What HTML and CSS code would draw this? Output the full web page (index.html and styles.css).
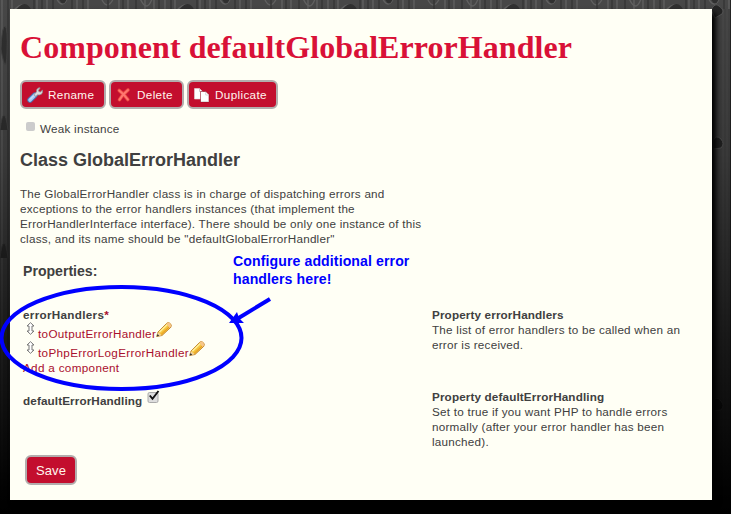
FILE: index.html
```html
<!DOCTYPE html>
<html lang="en">
<head>
<meta charset="utf-8">
<title>Component defaultGlobalErrorHandler</title>
<link rel="stylesheet" href="styles.css">
</head>
<body>
<svg class="wood" width="731" height="514" aria-hidden="true">
  <defs>
    <linearGradient id="fade" x1="0" y1="0" x2="0" y2="1">
      <stop offset="0" stop-color="#000" stop-opacity="0"/>
      <stop offset=".3" stop-color="#000" stop-opacity=".2"/>
      <stop offset=".65" stop-color="#000" stop-opacity=".65"/>
      <stop offset=".95" stop-color="#000" stop-opacity=".97"/>
      <stop offset="1" stop-color="#000"/>
    </linearGradient>
    <pattern id="grain" width="163" height="514" patternUnits="userSpaceOnUse">
      <rect width="163" height="514" fill="#474747"/>
      <g fill="none" stroke="#606060" stroke-width="1.3">
        <path d="M2 0v514M12 0v514M37 0v514M47 0v514M77 0v514M88 0v514M119 0v514M128 0v514M145 0v514M154 0v514"/>
        <path d="M14 10Q24 0 31 10M55 -5q7 18 14 0M100 -5q7 20 15 0M139 -4q8 20 14 0"/>
      </g>
      <g fill="none" stroke="#353535" stroke-width="1.5">
        <path d="M8 0v514M34 0v514M42 0v514M53 0v514M72 0v514M83 0v514M108 0v514M123 0v514M136 0v514M159 0v514"/>
      </g>
      <path d="M17 9q8-10 14 0M59-1q4 9 8 0M132 0l4 9" fill="#303030"/>
    </pattern>
  </defs>
  <rect width="731" height="514" fill="url(#grain)"/>
  <rect x="712" y="9" width="19" height="505" fill="#424242"/>
  <g fill="none" stroke="#4d4d4d"><path d="M723 9v505M727 9v505"/><path d="M730.500 0v514" stroke="#242424"/></g>
  <g fill="#252525" stroke="#555" stroke-width="1">
    <path d="M711 10q4-8 8-4 6 4 3 8l-7 4zM713 141q3-7 8-2 4 5 0 9l-8 1zM713 402q3-7 8-1 4 5 0 9l-8 1z"/>
    <path d="M1 49q1-23 4-23 3 2 2 27T1 49M0 130q4-30 8 0M0 258q4-30 8 0" fill="#303030" stroke="#444"/>
  </g>
  <rect width="731" height="514" fill="url(#fade)"/>
</svg>
<main class="page">
  <h1>Component defaultGlobalErrorHandler</h1>
  <div class="toolbar">
    <a class="button rename"><svg width="16" height="16" viewBox="0 0 16 16"><path d="M3 13L8 8" stroke="#4774b5" stroke-width="5.4" stroke-linecap="round"/><path d="M3 13L8 8" stroke="#a8caf5" stroke-width="3.6" stroke-linecap="round"/><path d="M3 12.500L7 8.500" stroke="#dceaff" stroke-width="1"/><path d="M7 7.400L9.500 5Q8.700 2 12 .7l1.200.2-1.700 2.300.4 1.400 1.500.3 2.100-1.800q.8 4-3 4.800-.8.200-1.700-.1L8.600 9.600z" fill="#ddd" stroke="#8b8990" stroke-width=".8"/></svg>Rename</a>
    <a class="button delete"><svg width="16" height="16" viewBox="0 0 16 16"><path d="M3.200 3.500q4.200 3 8.600 9M12 3Q6.700 7 3.500 12.700" fill="none" stroke="#e9453f" stroke-width="3.600" stroke-linecap="round"/><path d="M3.200 3.500q4.200 3 8.600 9M12 3Q6.700 7 3.500 12.700" fill="none" stroke="#ff7770" stroke-width="2" stroke-linecap="round"/></svg>Delete</a>
    <a class="button duplicate"><svg width="16" height="16" viewBox="0 0 16 16"><path d="M.5 1.500h5l3 3V12h-8z" fill="#fff" stroke="#ddd" stroke-width=".6"/><path d="M5.500 1.500v3h3" fill="none" stroke="#bbb" stroke-width=".8"/><path d="M6.500 4.500h5.300l3.200 3V15H6.500z" fill="#fff" stroke="#910f24" stroke-width=".6"/><path d="M11.700 5v3H15" fill="none" stroke="#ccc" stroke-width=".8"/><path d="M7 14.500h7.500" stroke="#ddd"/></svg>Duplicate</a>
  </div>
  <div class="weak"><span class="disabled-box"></span>Weak instance</div>
  <h2>Class GlobalErrorHandler</h2>
  <p class="description">The GlobalErrorHandler class is in charge of dispatching errors and<br>exceptions to the error handlers instances (that implement the<br>ErrorHandlerInterface interface). There should be only one instance of this<br>class, and its name should be "defaultGlobalErrorHandler"</p>
  <h3>Properties:</h3>
  <div class="property handlers">
    <div class="field">
      <b>errorHandlers<span class="required">*</span></b>
      <div class="handler"><svg class="move" width="9" height="13" viewBox="0 0 9 13"><path d="M4.500.7L8 4H6v5h2l-3.500 3.300L1 9h2V4H1z" fill="#fff" stroke="#777"/></svg><a>toOutputErrorHandler</a><svg class="pencil" width="16" height="16" viewBox="0 0 16 16"><path d="M.7 14.500L2 10 10.600 1.400Q12-.2 14 1.300t.9 3.900L6 13.500z" fill="#f6c33c" stroke="#b46e16" stroke-width=".8"/><path d="M3.300 10.300L11.300 2.500" stroke="#fff09a" stroke-width="1.600"/><path d="M5 12.500L13 5" stroke="#e69a20"/><path d="M.7 14.500L2 10.200l3.800 3z" fill="#f2d4a0"/><path d="M.7 14.500l.8-2.400 1.800 1.600z" fill="#333"/><path d="M10.700 1.500Q12.500-.3 14 1.300t.8 3.500l-1.500 1.200z" fill="#f7c68b"/></svg></div>
      <div class="handler"><svg class="move" width="9" height="13" viewBox="0 0 9 13"><path d="M4.500.7L8 4H6v5h2l-3.500 3.300L1 9h2V4H1z" fill="#fff" stroke="#777"/></svg><a>toPhpErrorLogErrorHandler</a><svg class="pencil" width="16" height="16" viewBox="0 0 16 16"><path d="M.7 14.500L2 10 10.600 1.400Q12-.2 14 1.300t.9 3.900L6 13.500z" fill="#f6c33c" stroke="#b46e16" stroke-width=".8"/><path d="M3.300 10.300L11.300 2.500" stroke="#fff09a" stroke-width="1.600"/><path d="M5 12.500L13 5" stroke="#e69a20"/><path d="M.7 14.500L2 10.200l3.800 3z" fill="#f2d4a0"/><path d="M.7 14.500l.8-2.400 1.800 1.600z" fill="#333"/><path d="M10.700 1.500Q12.500-.3 14 1.300t.8 3.500l-1.500 1.200z" fill="#f7c68b"/></svg></div>
      <a>Add a component</a>
    </div>
    <div class="help"><b>Property errorHandlers</b><br>The list of error handlers to be called when an<br>error is received.</div>
  </div>
  <div class="property handling">
    <div class="field checked-field"><b>defaultErrorHandling</b><svg width="13" height="14" viewBox="0 0 13 14"><rect x="1" y="2.500" width="10" height="10" rx="1.500" fill="#dedede" stroke="#aaa"/><path d="M2.800 5.500l2.700 3.300L11.500 1" fill="none" stroke="#111" stroke-width="1.900"/></svg></div>
    <div class="help"><b>Property defaultErrorHandling</b><br>Set to true if you want PHP to handle errors<br>normally (after your error handler has been<br>launched).</div>
  </div>
  <a class="button save">Save</a>
</main>
<div class="callout">Configure additional error<br>handlers here!</div>
<svg class="annotation" width="731" height="514" aria-hidden="true">
  <ellipse cx="121.500" cy="338" rx="120" ry="51" fill="none" stroke="#00f" stroke-width="4"/>
  <path d="M270 299L237 319" stroke="#00f" stroke-width="4"/>
  <path d="M229 323l8-11 2 6 5 5z" fill="#00f"/>
</svg>
</body>
</html>
```

FILE: styles.css
```css
* { box-sizing: border-box; }
body {
  margin: 0;
  width: 731px;
  height: 514px;
  overflow: hidden;
  position: relative;
  background: #111;
  color: #404040;
  font: 11.7px/15px "Liberation Sans", Arial, sans-serif;
  letter-spacing: .235px;
}
b { letter-spacing: .14px; }
.wood, .annotation { position: absolute; top: 0; left: 0; }
.page {
  position: relative;
  width: 702px;
  height: 491px;
  margin: 9px 0 0 10px;
  padding: 19px 10px 0;
  background: #fffff5;
  box-shadow: 4px 4px 5px #000;
}
h1 {
  margin: 0;
  color: #d91137;
  font: bold 32px/38px "Liberation Serif", "Times New Roman", serif;
  letter-spacing: .07px;
}
.toolbar { display: flex; gap: 3px; margin-top: 14px; }
.button {
  display: flex;
  align-items: center;
  height: 29px;
  padding: 0 9px 0 5px;
  border: 2px solid #b3adad;
  border-radius: 6px;
  background: #c30e2e;
  color: #fff5ee;
  letter-spacing: .35px;
}
.rename { width: 86px; }
.delete { width: 75px; }
.duplicate { width: 91px; }
.button svg { margin-right: 5px; }
.weak { display: flex; height: 15px; margin-top: 12px; padding-left: 6px; }
.disabled-box { width: 9px; height: 9px; margin: 1px 5px 0 0; border-radius: 2px; background: #ccc; }
h2 { margin: 13px 0 0; font-size: 18px; line-height: 22px; letter-spacing: 0; }
.description { margin: 15px 0 0; }
h3 { margin: 16px 0 0 3px; font-size: 14.1px; line-height: 18px; letter-spacing: 0; }
.property { display: grid; grid-template-columns: 409px 270px; padding-left: 3px; }
.handlers { height: 82px; margin-top: 27px; }
.required, .field a { color: #a90e2d; }
.field a { letter-spacing: .32px; }
.field > b { display: block; letter-spacing: .12px; }
.handlers .field > b { letter-spacing: .3px; }
.handler { display: flex; height: 19px; }
.move { margin: 0 3px 0; }
.handler a { line-height: 23px; height: 19px; }
.pencil { margin-top: 0; }
.field > a { display: block; }
.handling { height: 66px; }
.checked-field { display: flex; padding-top: 4px; }
.checked-field svg { margin: -3px 0 0 5px; }
.save { width: 52px; height: 30px; margin: 0 0 0 5px; padding: 0 9px; font-size: 13px; letter-spacing: .1px; }
.callout {
  position: absolute;
  left: 233px;
  top: 252px;
  color: #00f;
  font-size: 14.1px;
  font-weight: bold;
  line-height: 18px;
  letter-spacing: .1px;
}
```
